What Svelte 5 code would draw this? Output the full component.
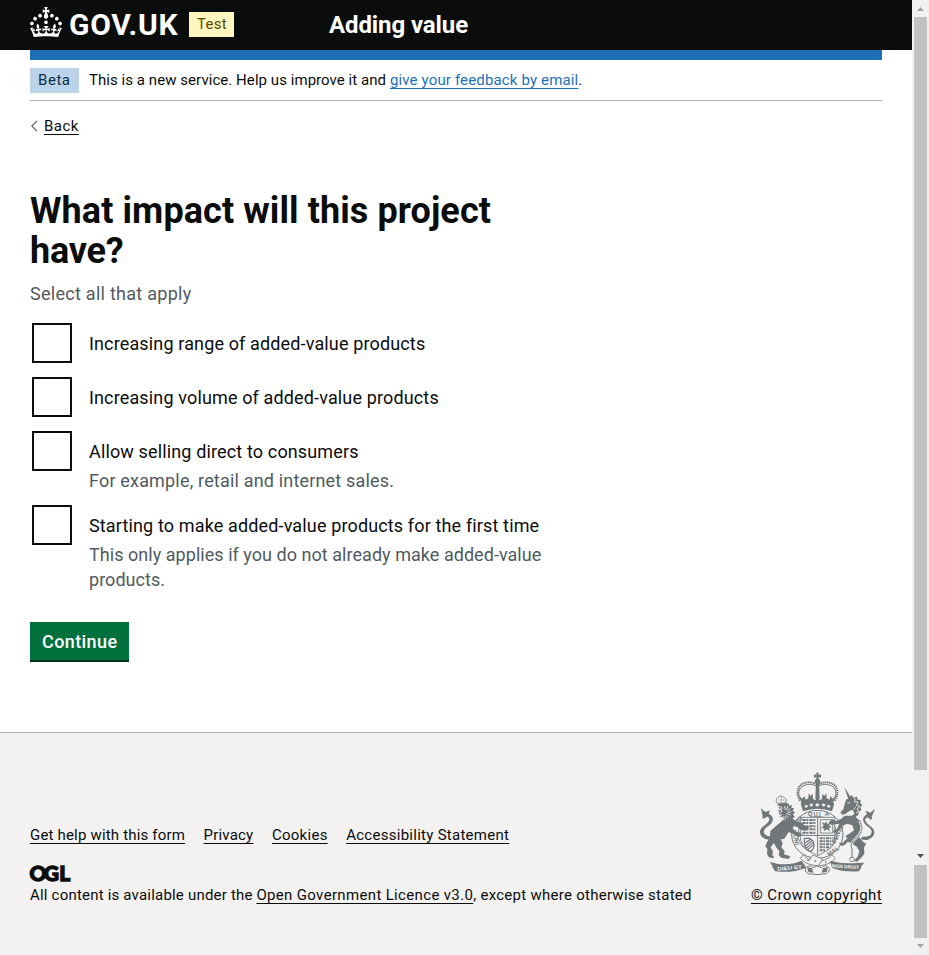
<script>
  const options = [
    { id: 'range', label: 'Increasing range of added-value products', hint: '' },
    { id: 'volume', label: 'Increasing volume of added-value products', hint: '' },
    { id: 'direct', label: 'Allow selling direct to consumers', hint: 'For example, retail and internet sales.' },
    { id: 'first', label: 'Starting to make added-value products for the first time', hint: 'This only applies if you do not already make added-value products.' }
  ];
  const links = [
    { id: 'help', text: 'Get help with this form' },
    { id: 'privacy', text: 'Privacy' },
    { id: 'cookies', text: 'Cookies' },
    { id: 'access', text: 'Accessibility Statement' }
  ];
  let checked = $state({});
</script>

<div class="screen">
  <div class="page">
    <header>
      <svg class="crown" width="32" height="30" viewBox="0 0 32 30" fill="#fff" aria-hidden="true">
        <path fill-rule="evenodd" d="M22.6 10.4c-1 .4-2-.1-2.4-1-.4-.9.1-2 1-2.4.9-.4 2 .1 2.4 1s-.1 2-1 2.4m-5.9 6.7c-.9.4-2-.1-2.4-1-.4-.9.1-2 1-2.4.9-.4 2 .1 2.4 1s-.1 2-1 2.4m10.8-3.7c-1 .4-2-.1-2.4-1-.4-.9.1-2 1-2.4.9-.4 2 .1 2.4 1s0 2-1 2.4m3.3 4.8c-1 .4-2-.1-2.4-1-.4-.9.1-2 1-2.4.9-.4 2 .1 2.4 1s-.1 2-1 2.4M17 4.7l2.3 1.2V2.5l-2.3.7-.2-.2.9-3h-3.4l.9 3-.2.2c-.1.1-2.3-.7-2.3-.7v3.4L15 4.7c.1.1.1.2.2.2l-1.3 4c-.1.2-.1.4-.1.6 0 1.1.8 2 1.9 2.2h.7c1-.2 1.9-1.1 1.9-2.1 0-.2 0-.4-.1-.6l-1.3-4c-.1-.2 0-.2.1-.3m-7.6 5.7c.9.4 2-.1 2.4-1 .4-.9-.1-2-1-2.4-.9-.4-2 .1-2.4 1s0 2 1 2.4m-5 3c.9.4 2-.1 2.4-1 .4-.9-.1-2-1-2.4-.9-.4-2 .1-2.4 1s.1 2 1 2.4m-3.2 4.8c.9.4 2-.1 2.4-1 .4-.9-.1-2-1-2.4-.9-.4-2 .1-2.4 1s0 2 1 2.4m14.8 11c4.4 0 8.6.3 12.3.8 1.1-4.5 2.4-7 3.7-8.8l-2.5-.9c.2 1.3.3 1.9 0 2.7-.4-.4-.8-1.1-1.1-2.3l-1.2 4c.7-.5 1.3-.8 2-.9-1.1 2.5-2.6 3.1-3.5 3-1.1-.2-1.7-1.2-1.5-2.1.3-1.2 1.5-1.5 2.1-.1 1.1-2.3-.8-3-2-2.3 1.9-1.9 2.1-3.5.6-5.6-2.1 1.6-2.1 3.2-1.2 5.5-1.2-1.4-3.2-.6-2.5 1.6.9-1.4 2.1-.5 1.9.8-.2 1.1-1.7 2.1-3.5 1.9-2.7-.2-2.9-2.1-2.9-3.6.7-.1 1.9.5 2.9 1.9l.4-4.3c-1.1 1.1-2.1 1.4-3.2 1.4.4-1.2 2.1-3 2.1-3h-5.4s1.7 1.9 2.1 3c-1.1 0-2.1-.2-3.2-1.4l.4 4.3c1-1.4 2.2-2 2.9-1.9-.1 1.5-.2 3.4-2.9 3.6-1.9.2-3.4-.8-3.5-1.9-.2-1.3 1-2.2 1.9-.8.7-2.3-1.2-3-2.5-1.6.9-2.2.9-3.9-1.2-5.5-1.5 2-1.3 3.7.6 5.6-1.2-.7-3.1 0-2 2.3.6-1.4 1.8-1.1 2.1.1.2.9-.3 1.9-1.5 2.1-.9.2-2.4-.5-3.5-3 .6 0 1.2.3 2 .9l-1.2-4c-.3 1.1-.7 1.9-1.1 2.3-.3-.8-.2-1.4 0-2.7l-2.9.9C1.3 23 2.6 25.5 3.7 30c3.7-.5 7.9-.8 12.3-.8" />
      </svg>
      <div class="wordmark"><span>GOV.UK</span></div>
      <span class="tag test"><span>Test</span></span>
      <div class="service"><span>Adding value</span></div>
    </header>

    <div class="container">
      <div class="bar"></div>
      <div class="phase">
        <span class="tag beta"><span>Beta</span></span>
        <p><span class="intro">This is a new service. Help us improve it and</span> <a href="#feedback">give your feedback by email</a>.</p>
      </div>

      <div class="back">
        <svg width="8" height="12" viewBox="0 0 8 12" fill="none" stroke="#505a5f" stroke-width="1.1"><path d="M7 .8 1.8 6 7 11.2" /></svg>
        <a href="#back">Back</a>
      </div>

      <main>
        <h1><span class="h-a">What impact will this project</span><br /><span class="h-b">have?</span></h1>
        <p class="hint lead">Select all that apply</p>
        <div class="options">
          {#each options as option (option.id)}
            <div class="option">
              <button class="box" role="checkbox" aria-checked={!!checked[option.id]} aria-label={option.label} onclick={() => (checked[option.id] = !checked[option.id])}>
                {#if checked[option.id]}
                  <svg width="24" height="24" viewBox="0 0 24 24" fill="none" stroke="#0b0c0c" stroke-width="4"><path d="m3 12 6 6L21 5" /></svg>
                {/if}
              </button>
              <div class="words">
                <div class="label {option.id}">{option.label}</div>
                {#if option.hint}<div class="hint sub {option.id}">{option.hint}</div>{/if}
              </div>
            </div>
          {/each}
        </div>
        <button class="continue"><span>Continue</span></button>
      </main>
    </div>

    <footer>
      <div class="meta">
        <nav>
          {#each links as link (link.id)}
            <a class={link.id} href="#{link.id}">{link.text}</a>
          {/each}
        </nav>
        <svg class="ogl" width="44" height="17" viewBox="0 0 44 17"><text x="-.5 13.700 29.200" y="16">OGL</text></svg>
        <p class="licence"><span class="lic-a">All content is available under the</span> <a class="lic-b" href="#ogl">Open Government Licence v3.0</a><span class="lic-c">, except where otherwise stated</span></p>
      </div>
      <div class="copyright">
        <svg width="117" height="104" viewBox="57 36 351 312" fill="#6f777b" stroke="none" aria-hidden="true">
          <!-- imperial crown -->
          <path d="M228 38h9l-2 7 8-2v10l-8-2 2 8h-9l2-8-8 2V43l8 2z" />
          <circle cx="232.500" cy="64" r="8" />
          <path d="M228 70h9l2 45-6 13-7-13z" />
          <g fill="none" stroke="#6f777b">
            <path d="M186 124c-17-22-11-43 10-49 16-5 28 0 36 7 8-7 20-12 36-7 21 6 27 27 10 49" stroke-width="3" />
            <path d="M180 122c-15-27-5-49 16-54 15-3 29 1 36 6 8-5 22-9 37-6 21 5 31 27 16 54" stroke-width="6" stroke-dasharray="4 2" />
          </g>
          <path d="m180 109 7 7 7-8 2 11 9-4 1-15 6 8 6-7 1 16 9 4 4-15 5 15 9-4 1-16 6 7 6-8 1 15 9 4 2-11 7 8 7-7-7 25q-46-14-93 0z" />
          <path fill-rule="evenodd" d="M182 130q50-16 101 0l-7 24q-44-16-87 0zm16 4-5 5 5 5 7-6zm16-4-6 5 6 5 6-6zm18-1-7 6 7 5 7-5zm19 1-7 4 7 6 6-5zm15 4-6 4 6 6 6-5z" />

          <!-- garter and shield -->
          <g fill="none" stroke="#6f777b">
            <ellipse cx="232" cy="223" rx="77" ry="72" stroke-width="3" />
            <ellipse cx="232" cy="224" rx="58" ry="55" stroke-width="2.500" />
            <path d="M181 172h103v58c0 29-23 43-51 57-29-14-52-28-52-57z" fill="#f3f2f1" stroke-width="2.500" />
            <path d="M233 172v114M181 226h103" stroke-width="3" />
            <path d="M187 180h39M187 189h41M187 199h39M187 208h41M187 218h39" stroke-width="6" stroke-dasharray="10 2 6 3" />
            <path d="M239 235h41M239 244h40M239 253h37M239 262h29M239 271h17" stroke-width="6" stroke-dasharray="9 2 5 3" />
            <path d="M241 179h37v40h-37z" stroke-width="2.500" />
            <path d="m247 186 6 5 5-6 4 8 9-5-4 9 7 4-8 2 3 11-8-7-8 6-1-9-7 1 6-8z" fill="#6f777b" />
            <path d="M193 236c17-5 27 3 29 18 1 11-6 20-13 20-11-5-18-17-16-38zM194 260l23-20M198 265l24-20M203 269l19-16M195 249l16-11" stroke-width="3.500" />
            <path d="M190 284c9 13 22 19 43 19 20 0 34-8 43-19l10 11c-10 12-25 20-47 22-24 1-45-8-58-22z" fill="#f3f2f1" stroke-width="2.500" />
            <path d="m207 302 11-17 30 12-11 18" fill="#f3f2f1" stroke-width="2.500" />
            <circle cx="204" cy="301" r="2" fill="#6f777b" />
            <circle cx="226" cy="303" r="2" fill="#6f777b" />
            <circle cx="257" cy="306" r="2" fill="#6f777b" />
          </g>
          <g class="motto">
            <text x="203" y="168" textLength="64">QUI A</text>
            <text x="158" y="220" transform="rotate(78 162 215)">HONI</text>
            <text x="282" y="252" transform="rotate(-66 284 248)">PENSE</text>
            <text x="169" y="193" transform="rotate(-48 171 191)">SO</text>
            <text x="264" y="292" transform="rotate(-35 262 286)">MAL</text>
          </g>

          <!-- crowned lion -->
          <path d="m111 136 8-6 15-1 10 1 5 7 7-2-2 8 8 2-4 8 7 4-6 7 6 6-7 5 7 8 22 6 8 10 12 0-2 8-9 5-15-3-9-8-13-4-2 8 12 10 13 3 5 8-9 4-12-5-20-9-7 11-7 10-10 1 6 12-4 12 10 11-2 10 19 6-5 8-23-4-7-9 2-10-10-13-6-12-10 12 7 14-2 11 6 6-7 3-10-4-5-9 1-15-6-8 4-11 10-17 1-18 18-16 16-13 6-9-5-3-8-3 6-4-8-4 3-5-5-4 5-5-4-5 7-3z" />
          <path d="m120 139 7 5-10 5 9 2-4 9m11-22 3 11m7-11-3 12m11-5-9 9m12 1-11 3m9 7-12-4m5 12-8-8m-1 13-1-10m-7 0 4 14m-12-14 7-4" stroke="#f3f2f1" stroke-width="2.500" fill="none" />
          <path d="M111 130c-5-8-2-18 6-19l5-4 5 4c9 0 14 9 10 18z" fill="#f3f2f1" stroke="#6f777b" stroke-width="2.500" />
          <path d="M124 107v21M114 120h22" stroke="#6f777b" stroke-width="2" stroke-dasharray="3 2" />
          <path d="M93 239c-16 2-33-7-33-23 0-17 28-24 28-38 0-9-9-10-12-4-5 6-12-1-8-6l-5-23 13 11 14-5-4 10c14 6 18 22 2 35-12 9-21 15-14 26 5 6 13 8 23 7z" />

          <!-- chained unicorn -->
          <path d="m313 80 20 33-8 5z" />
          <path d="m318 119 11-6 5-9 6 9 11-3 2 9 9 1-1 10 6 5-6 7 3 8-7 6-3 10-13 8-11-1 13-12-4-11-11 3-12 9-10 2-5-7 9-9z" />
          <path d="M345 114l-1 12 9-1-3 12 10 2-9 8 6 7-9 5M322 129l8-1M347 141l-6 8" stroke="#f3f2f1" stroke-width="2.500" fill="none" />
          <path d="m342 167 15 13 8 14 1 20-8 18 11 13 9 6-6 12 1 18-9 12-13 12-9-2 12-15 4-15-7-12-15-10-12-6-11 11-9 2-8-10 11 1 15-14-6-7 14-8 12-9-5-15-15-5-15 6-14 19-10 4-5-6 13-7 7-16-24 4-8-8 11-10 10 6 17-7 10-9z" />
          <path d="M363 238c14 7 39-3 40-20 1-18-26-23-27-38 0-9 9-10 12-4 5 6 11 0 7-6l10-24-14 12-15-6 5 11c-14 7-17 21-1 34 12 9 19 15 13 26-5 8-17 7-27 7z" />
          <path d="M359 181c14 28 2 43-11 53-17 14-16 23-12 35v22" fill="none" stroke="#f3f2f1" stroke-width="8" />
          <path d="M359 181c14 28 2 43-11 53-17 14-16 23-12 35v24" fill="none" stroke="#6f777b" stroke-width="4" stroke-dasharray="4 2" />
          <circle cx="336" cy="298" r="7" fill="none" stroke="#6f777b" stroke-width="2.500" />

          <!-- motto ribbon -->
          <path d="m90 306 21 5q40 6 74-9l14 21q-41 17-93 11l-7-9-2-7z" />
          <path d="M270 302q44 12 86 6h17l-9 10-1 7-7 9q-46 3-80-10z" />
          <path d="M196 325c8-9 17-10 23-2l13-5 13 5c7-8 16-7 23 2 2 12-9 19-22 17l-14 2-14-2c-13 2-24-5-22-17z" fill="#f3f2f1" stroke="#6f777b" stroke-width="3" />
          <path d="m201 322 15 2 4 14-15-2zm63 0-15 2-4 14 15-2z" />
          <g class="ribbon">
            <text x="112" y="329" textLength="74" lengthAdjust="spacingAndGlyphs" transform="rotate(-5 150 322)">DIEU ET</text>
            <text x="275" y="325" textLength="82" lengthAdjust="spacingAndGlyphs" transform="rotate(4 315 322)">MON DROIT</text>
          </g>
        </svg>
        <a class="copy" href="#copyright">© Crown copyright</a>
      </div>
    </footer>
  </div>

  <div class="scrollbar" aria-hidden="true">
    <svg width="17" height="17" viewBox="0 0 17 17"><path d="M5 11h7L8.500 7z" fill="#a3a3a3" /></svg>
    <div class="thumb main-thumb"></div>
    <svg class="mid" width="17" height="17" viewBox="0 0 17 17"><path d="M5 7h7l-3.500 4z" fill="#505050" /></svg>
    <div class="thumb end-thumb"></div>
    <svg width="17" height="17" viewBox="0 0 17 17"><path d="M5 6h7l-3.500 4z" fill="#a3a3a3" /></svg>
  </div>
</div>

<style>
  :global(body) { margin: 0; background: #fff; }
  .screen { display: flex; width: 929px; height: 955px; overflow: hidden; font-family: Roboto, "Liberation Sans", sans-serif; color: #0b0c0c; font-size: 15px; line-height: 20px; }
  .page { width: 912px; display: flex; flex-direction: column; }
  p, h1 { margin: 0; }
  a { color: #0b0c0c; text-decoration: underline; text-decoration-thickness: 1px; text-underline-offset: 3px; text-decoration-skip-ink: none; }
  span, a, .label, .hint { white-space: nowrap; }
  header { box-sizing: border-box; height: 50px; background: #0b0c0c; color: #fff; display: flex; padding-left: 30px; align-items: flex-start; }
  .crown { margin-top: 7px; flex: none; }
  .wordmark { width: 120px; padding: 7px 0 0 7px; box-sizing: border-box; font-size: 30px; line-height: 36px; font-weight: 700; letter-spacing: .75px; }
  .tag { box-sizing: border-box; height: 25px; padding: 2px 8px; font-size: 15px; line-height: 20px; letter-spacing: .55px; }
  .test { margin: 12px 0 0 7px; width: 45px; background: #fff7bf; color: #594d00; letter-spacing: .3px; }
  .service { margin: 10px 0 0 95px; font-size: 24px; line-height: 30px; font-weight: 700; letter-spacing: -.1px; }
  .container { margin: 0 30px; height: 682px; }
  .bar { height: 10px; background: #1d70b8; }
  .phase { display: flex; align-items: flex-start; padding-top: 8px; height: 32px; border-bottom: 1px solid #b1b4b6; }
  .beta { width: 49px; background: #bbd4ea; color: #0c2d4a; margin-right: 10px; }
  .phase p { padding-top: 2px; }
  .intro { letter-spacing: .055px; }
  .phase a { color: #1d70b8; letter-spacing: .15px; }
  .back { display: flex; align-items: center; gap: 6px; margin-top: 15px; height: 20px; letter-spacing: .5px; }
  main { padding-top: 55px; }
  h1 { font-size: 36px; line-height: 40px; font-weight: 700; letter-spacing: .09px; }
  .h-b { letter-spacing: -.2px; }
  .hint { color: #505a5f; }
  .lead { margin-top: 10px; font-size: 18px; line-height: 25px; letter-spacing: .27px; }
  .options { margin-top: 15px; display: flex; flex-direction: column; gap: 10px; padding-left: 2px; }
  .option { display: flex; gap: 17px; align-items: flex-start; min-height: 44px; }
  .box { width: 40px; height: 40px; flex: none; padding: 6px; background: #fff; border: 2px solid #0b0c0c; border-radius: 0; margin-top: 2px; }
  .words { padding-top: 10px; font-size: 18px; line-height: 25px; letter-spacing: .14px; }
  .sub { margin-top: 4px; }
  .sub.direct { letter-spacing: .18px; }
  .sub.first { width: 460px; white-space: normal; letter-spacing: .04px; }
  .continue { display: block; margin-top: 30px; width: 99px; height: 40px; padding: 2px 0 0 12px; text-align: left; border: 0; border-bottom: 2px solid #002d18; background: #00703c; color: #fff; font: 500 18px/36px Roboto, sans-serif; letter-spacing: .4px; }
  footer { flex: 1; border-top: 1px solid #b1b4b6; background: #f3f2f1; display: flex; justify-content: space-between; padding: 0 30px; }
  .meta { padding-top: 92px; }
  nav { display: flex; gap: 18.5px; }
  .help { letter-spacing: .18px; }
  .privacy { letter-spacing: .2px; }
  .cookies { letter-spacing: .28px; }
  .access { letter-spacing: .27px; }
  .ogl { display: block; margin-top: 20px; overflow: visible; }
  .ogl text { font: 900 21px Lato, sans-serif; fill: #0b0c0c; stroke: #0b0c0c; stroke-width: 1.3; }
  .licence { margin-top: 3px; }
  .lic-a { letter-spacing: .2px; }
  .lic-b { letter-spacing: .34px; }
  .lic-c { letter-spacing: .27px; }
  .copyright { display: flex; flex-direction: column; align-items: flex-end; padding-top: 39px; }
  .copyright svg { margin: 0 6px 9px 0; }
  .copy { letter-spacing: .4px; }
  .motto text { font: 700 18px "Liberation Sans", sans-serif; }
  .ribbon text { font: 700 15px "Liberation Sans", sans-serif; fill: #f3f2f1; }
  .scrollbar { width: 17px; background: #f1f1f1; display: flex; flex-direction: column; align-items: center; }
  .scrollbar svg { flex: none; }
  .thumb { width: 13px; background: #c1c1c1; flex: none; }
  .main-thumb { height: 753px; }
  .mid { margin-top: 77px; }
  .end-thumb { height: 73px; margin-top: 1px; }
</style>
